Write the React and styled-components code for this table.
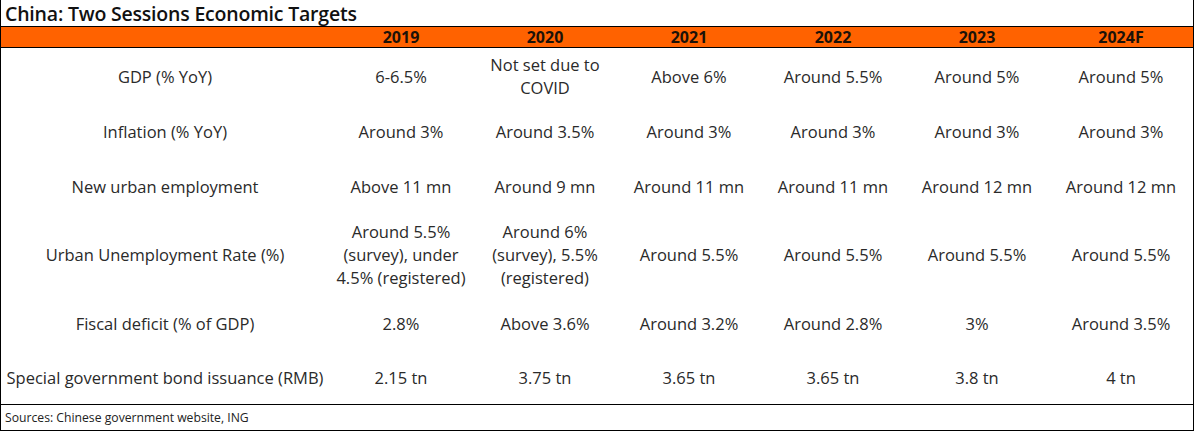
import React from "react";
import styled, { createGlobalStyle } from "styled-components";

const GlobalStyle = createGlobalStyle`
  html, body {
    margin: 0;
    padding: 0;
    background: #ffffff;
  }
  body {
    font-family: "Open Sans", "Noto Sans", "Liberation Sans", sans-serif;
    color: #222222;
  }
`;

const years = ["2019", "2020", "2021", "2022", "2023", "2024F"];

const rows = [
  {
    label: "GDP (% YoY)",
    height: 56,
    values: ["6-6.5%", "Not set due to\nCOVID", "Above 6%", "Around 5.5%", "Around 5%", "Around 5%"],
  },
  {
    label: "Inflation (% YoY)",
    height: 55,
    values: ["Around 3%", "Around 3.5%", "Around 3%", "Around 3%", "Around 3%", "Around 3%"],
  },
  {
    label: "New urban employment",
    height: 54,
    values: ["Above 11 mn", "Around 9 mn", "Around 11 mn", "Around 11 mn", "Around 12 mn", "Around 12 mn"],
  },
  {
    label: "Urban Unemployment Rate (%)",
    height: 82,
    values: [
      "Around 5.5%\n(survey), under\n4.5% (registered)",
      "Around 6%\n(survey), 5.5%\n(registered)",
      "Around 5.5%",
      "Around 5.5%",
      "Around 5.5%",
      "Around 5.5%",
    ],
  },
  {
    label: "Fiscal deficit (% of GDP)",
    height: 56,
    values: ["2.8%", "Above 3.6%", "Around 3.2%", "Around 2.8%", "3%", "Around 3.5%"],
  },
  {
    label: "Special government bond issuance (RMB)",
    height: 53,
    values: ["2.15 tn", "3.75 tn", "3.65 tn", "3.65 tn", "3.8 tn", "4 tn"],
  },
];

const App = () => {
  return (
    <>
      <GlobalStyle />
      <Frame>
        <Title>China: Two Sessions Economic Targets</Title>
        <HeaderRow>
          <span />
          {years.map((y) => (
            <HeaderCell key={y}>{y}</HeaderCell>
          ))}
        </HeaderRow>
        <Body>
          {rows.map((row) => (
            <Row key={row.label} $height={row.height}>
              <Cell>{row.label}</Cell>
              {row.values.map((v, i) => (
                <Cell key={i}>{v}</Cell>
              ))}
            </Row>
          ))}
        </Body>
        <Footer>Sources: Chinese government website, ING</Footer>
      </Frame>
    </>
  );
};

export default App;

const Frame = styled.div`
  width: 1192px;
  height: 430px;
  border-left: 1px solid #000;
  border-right: 1px solid #000;
  border-bottom: 1px solid #000;
  display: flex;
  flex-direction: column;
  box-sizing: content-box;
`;

const Title = styled.div`
  height: 27px;
  box-sizing: border-box;
  padding-left: 4px;
  display: flex;
  align-items: center;
  font-size: 19.5px;
  font-weight: 600;
  color: #111;
  letter-spacing: -0.2px;
  border-bottom: 1px solid #000;
`;

const HeaderRow = styled.div`
  display: grid;
  grid-template-columns: 328px repeat(6, 144px);
  height: 20px;
  background: #ff6200;
  border-bottom: 1px solid #000;
  align-items: center;
`;

const HeaderCell = styled.div`
  text-align: center;
  font-size: 16px;
  font-weight: 700;
  color: #1c1208;
  line-height: 20px;
`;

const Body = styled.div`
  display: flex;
  flex-direction: column;
  border-bottom: 1px solid #000;
`;

const Row = styled.div`
  display: grid;
  grid-template-columns: 328px repeat(6, 144px);
  height: ${(p) => p.$height}px;
  align-items: center;
`;

const Cell = styled.div`
  text-align: center;
  white-space: pre-line;
  font-size: 16.5px;
  line-height: 23px;
  color: #2a2a2a;
`;

const Footer = styled.div`
  flex: 1;
  display: flex;
  align-items: center;
  padding-left: 4px;
  font-size: 12.2px;
  color: #222;
`;
